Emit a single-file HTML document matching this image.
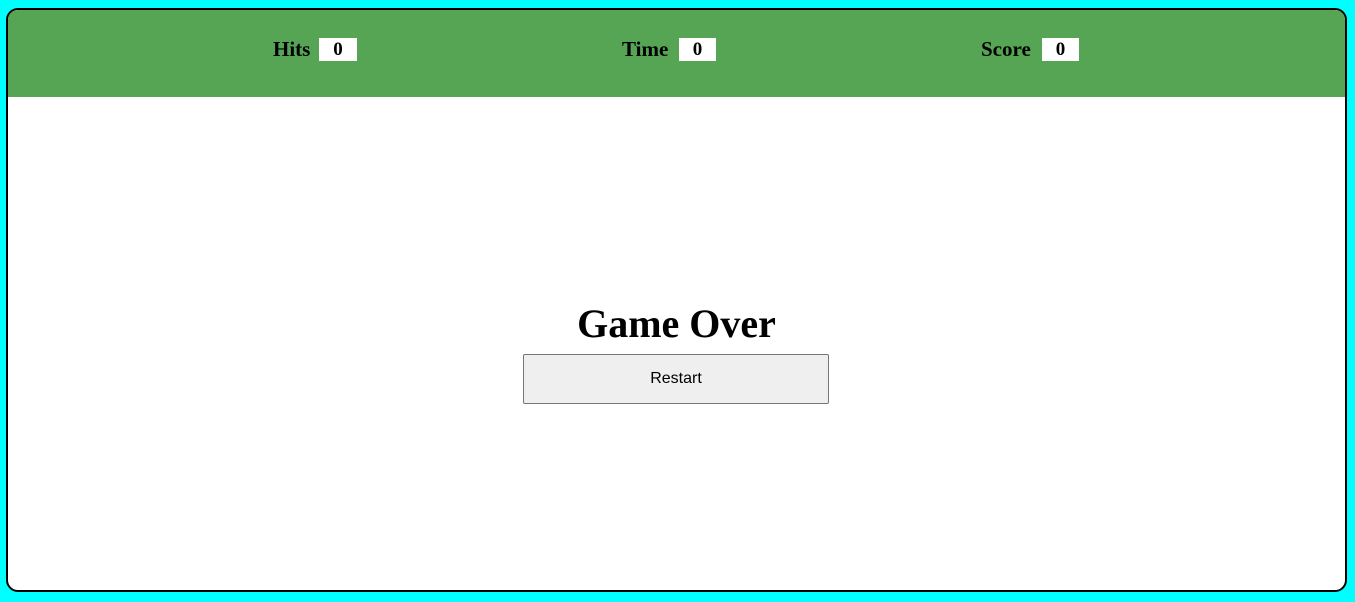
<!DOCTYPE html>
<html><head><style>
html,body{margin:0;padding:0;}
body{width:1355px;height:602px;background:#00ffff;position:relative;overflow:hidden;font-family:"Liberation Serif",serif;}
.box{position:absolute;left:6px;top:8px;width:1337px;height:580px;border:2px solid #000;border-radius:12px;background:#fff;overflow:hidden;}
.hdr{position:absolute;left:0;top:0;width:100%;height:87px;background:#55a555;}
.lbl{position:absolute;top:27px;font-weight:bold;font-size:21px;line-height:24px;color:#000;}
.val{position:absolute;top:28px;height:23px;background:#fff;font-weight:bold;font-size:19px;line-height:24px;text-align:center;}
h1{position:absolute;left:0;width:100%;top:290px;margin:0;text-align:center;font-size:40px;line-height:48px;font-weight:bold;}
button{position:absolute;left:515px;top:344px;width:306px;height:50px;background:#efefef;border:1px solid #767676;border-radius:2px;font-family:"Liberation Sans",sans-serif;font-size:16px;color:#000;}
</style></head><body>
<div class="box">
<div class="hdr">
<div class="lbl" style="left:265px">Hits</div><div class="val" style="left:311px;width:38px">0</div>
<div class="lbl" style="left:614px">Time</div><div class="val" style="left:671px;width:37px">0</div>
<div class="lbl" style="left:973px">Score</div><div class="val" style="left:1034px;width:37px">0</div>
</div>
<h1>Game Over</h1>
<button>Restart</button>
</div>
</body></html>
